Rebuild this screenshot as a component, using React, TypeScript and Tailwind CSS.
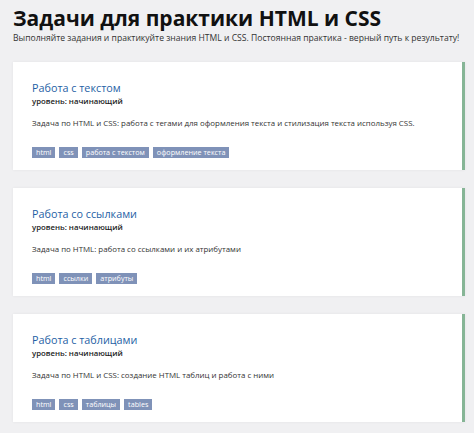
const font = { fontFamily: '"Open Sans", "Noto Sans", sans-serif' }

const tasks = [
  {
    title: 'Работа с текстом',
    desc: 'Задача по HTML и CSS: работа с тегами для оформления текста и стилизация текста используя CSS.',
    tags: ['html', 'css', 'работа с текстом', 'оформление текста'],
  },
  {
    title: 'Работа со ссылками',
    desc: 'Задача по HTML: работа со ссылками и их атрибутами',
    tags: ['html', 'ссылки', 'атрибуты'],
  },
  {
    title: 'Работа с таблицами',
    desc: 'Задача по HTML и CSS: создание HTML таблиц и работа с ними',
    tags: ['html', 'css', 'таблицы', 'tables'],
  },
]

function TaskCard({ title, desc, tags }: { title: string; desc: string; tags: string[] }) {
  return (
    <div className="flex h-[108px] bg-white border-r-[3px] border-[#86b596] shadow-[0_0_3px_rgba(0,0,0,0.06)]">
      <div className="flex flex-col pl-[19px] pt-[19px]">
        <a className="text-[10.8px] leading-[14px] text-[#1f5fa5]">{title}</a>
        <div className="text-[7.8px] leading-[13px] font-semibold text-[#222]">уровень: начинающий</div>
        <p className="mt-[9px] text-[7.9px] leading-[12px] text-[#333] whitespace-nowrap">{desc}</p>
        <div className="mt-[18px] flex gap-[4px]">
          {tags.map((t) => (
            <span key={t} className="h-[11px] px-[4px] bg-[#7f92b8] text-white text-[7.2px] leading-[11px]">
              {t}
            </span>
          ))}
        </div>
      </div>
    </div>
  )
}

export default function App() {
  return (
    <div className="w-[474px] h-[433px] overflow-hidden bg-[#f0f0f2] px-[13px] pt-[5px]" style={font}>
      <h1 className="text-[21px] leading-[26px] font-bold text-[#111]">Задачи для практики HTML и CSS</h1>
      <p className="text-[8.6px] leading-[14px] text-[#333] whitespace-nowrap">
        Выполняйте задания и практикуйте знания HTML и CSS. Постоянная практика - верный путь к результату!
      </p>
      <div className="mt-[17px] mr-[-4px] flex flex-col gap-[18px]">
        {tasks.map((t) => (
          <TaskCard key={t.title} {...t} />
        ))}
      </div>
    </div>
  )
}
